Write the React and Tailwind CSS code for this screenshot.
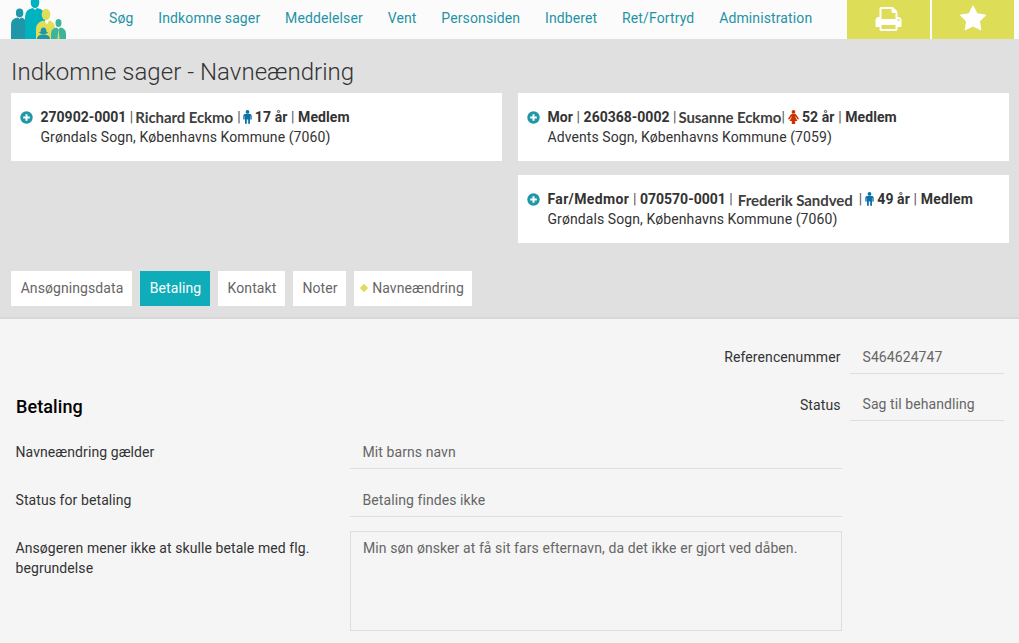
import { useState } from 'react'

const menu = ['Søg', 'Indkomne sager', 'Meddelelser', 'Vent', 'Personsiden', 'Indberet', 'Ret/Fortryd', 'Administration']

const tabs = [
  { name: 'Ansøgningsdata', width: 'w-[121px]' },
  { name: 'Betaling', width: 'w-[70px]' },
  { name: 'Kontakt', width: 'w-[67px]' },
  { name: 'Noter', width: 'w-[53px]' },
  { name: 'Navneændring', width: 'w-[118px]', marked: true },
]

function Logo() {
  return (
    <svg className="ml-[11px] h-[39px] w-[55px]" viewBox="11 0 55 39">
      <g fill="#1f97a9">
        <ellipse cx="19.6" cy="13" rx="3.7" ry="4.4" />
        <path d="M11 39V25q0-7 7-7.500l1.600 1.500 1.600-1.500q5 .5 5 7.500v14z" />
      </g>
      <g fill="#00b2bf">
        <ellipse cx="35" cy="2.500" rx="4.300" ry="5.500" />
        <path d="M25 39V17q0-8 8-9l2 2 2-2q8 1 8 9v22z" />
      </g>
      <g fill="#dfde56">
        <ellipse cx="46" cy="14.500" rx="4.300" ry="5.700" />
        <path d="M36 39V29q0-7 8-8.500l3 4 2-4q6 1 6 8v10.500z" />
      </g>
      <g fill="#1f97a9">
        <path d="M40.500 32q0-4.500 3-4.500t3 4.500l2 .5-2 1q-3 2-6 0l-2-1z" />
        <path d="M37 39q0-4.500 6.500-4.500t6.500 4.500z" />
      </g>
      <g fill="#3db39e">
        <ellipse cx="58.500" cy="23" rx="3" ry="4" />
        <path d="M51 39v-5q0-6 6-6.500l1.500 2 1.500-2q6 .5 6 6.500v5z" />
      </g>
      <path d="M58.500 28.500l1 10.500h-2z" fill="#dfde56" />
    </svg>
  )
}

function PlusIcon() {
  return (
    <svg className="h-[13px] w-[13px] shrink-0" viewBox="0 0 13 13">
      <circle cx="6.500" cy="6.500" r="6.200" fill="#1f97a9" />
      <path d="M6.500 3.200v6.600M3.200 6.500h6.600" stroke="#fff" strokeWidth="2" />
    </svg>
  )
}

function PersonIcon({ female }) {
  if (female) {
    return (
      <svg className="h-[14px] w-[11px]" viewBox="0 0 11 14" fill="#cc3300">
        <circle cx="5.500" cy="1.900" r="1.900" />
        <path d="M4 4h3q.8 0 1.300.8L10.800 8.500q.2.8-.5 1-.5.1-.9-.4L7.300 6.200v.9L9.500 11H7.200v3H3.800v-3H1.500l2.200-3.900v-.9L1.600 9.100q-.4.500-.9.400-.7-.2-.5-1L2.700 4.800Q3.200 4 4 4z" />
      </svg>
    )
  }
  return (
    <svg className="h-[14px] w-[9px]" viewBox="0 0 9 14" fill="#0b72a8">
      <circle cx="4.500" cy="1.900" r="1.900" />
      <path d="M2 4h5q1.700 0 1.700 1.700V9q0 .7-.7.700T7.300 9V6H7v7.200q0 .8-.9.800t-.9-.8V9.500H3.800v3.700q0 .8-.9.800T2 13.200V6h-.3v3q0 .7-.7.700T.3 9V5.700Q.3 4 2 4z" />
    </svg>
  )
}

function PersonCard({ address, children }) {
  return (
    <div className="flex h-[68px] w-[491px] shrink-0 bg-white pl-[9px] text-[#333]">
      <div className="pt-[18px]">
        <PlusIcon />
      </div>
      <div className="ml-[7.5px] pt-[14px] leading-5">
        <div className="flex h-5 items-center whitespace-pre font-bold">{children}</div>
        <div>{address}</div>
      </div>
    </div>
  )
}

const Sep = () => <span className="font-normal text-[#555]">|</span>

function Name({ children, className }) {
  return <span className={'font-[Lato,sans-serif] text-[15px] font-bold text-[#404040] ' + className}>{children}</span>
}

function Age({ children }) {
  return <span>{children} </span>
}

function Field({ children }) {
  return <div className="mt-[7px] h-[27px] border-b border-[#dedede] pl-[12.5px] text-[#666]">{children}</div>
}

export default function App() {
  const [active, setActive] = useState('Betaling')

  return (
    <div className="h-[643px] w-[1019px] overflow-hidden bg-[#f5f5f5] font-[Roboto,sans-serif] text-sm leading-5 tracking-[0.085px] text-[#333]">
      <header className="flex h-[39px] bg-[#fbfbfb]">
        <Logo />
        <nav className="ml-[43px] flex gap-[24.8px] pt-2 tracking-[0.12px] text-[#1f93a5]">
          {menu.map((item) => (
            <a key={item} href="#" className="whitespace-nowrap">{item}</a>
          ))}
        </nav>
        <div className="ml-auto mr-[5px] flex gap-0.5">
          <button className="flex w-[83px] justify-center bg-[#dddd57] pt-[5px]">
            <svg className="h-7 w-[29px]" viewBox="0 0 1792 1792" fill="#fff">
              <path d="M448 1536h896v-256h-896v256zM448 896h896v-384h-160q-40 0-68-28t-28-68v-160h-640v640zM1600 960q0-26-19-45t-45-19-45 19-19 45 19 45 45 19 45-19 19-45zM1728 960v416q0 13-9.500 22.500t-22.500 9.500h-224v160q0 40-28 68t-68 28h-960q-40 0-68-28t-28-68v-160h-224q-13 0-22.500-9.500t-9.500-22.500v-416q0-79 56.500-135.500t135.500-56.500h64v-544q0-40 28-68t68-28h672q40 0 88 20t76 48l152 152q28 28 48 76t20 88v256h64q79 0 135.500 56.500t56.500 135.500z" />
            </svg>
          </button>
          <button className="flex w-[82px] justify-center bg-[#dddd57] pt-[5px]">
            <svg className="h-7 w-7" viewBox="0 0 1792 1792" fill="#fff">
              <path d="M1728 647q0 22-26 48l-363 354 86 500q1 7 1 20 0 21-10.500 35.500t-30.500 14.500q-19 0-40-12l-449-236-449 236q-22 12-40 12-21 0-31.500-14.500t-10.500-35.500q0-6 2-20l86-500-364-354q-25-27-25-48 0-37 56-46l502-73 225-455q19-41 49-41t49 41l225 455 502 73q56 9 56 46z" />
            </svg>
          </button>
        </div>
      </header>

      <section className="h-[280px] border-b-2 border-[#d8d8d8] bg-[#e0e0e0] px-[11px]">
        <h1 className="h-[54px] pt-[17px] text-2xl leading-8 font-light tracking-[0.04px]">Indkomne sager - Navneændring</h1>
        <div className="flex gap-4">
          <PersonCard address="Grøndals Sogn, Københavns Kommune (7060)">
            <span className="tracking-normal">270902-0001 </span><Sep />
            <Name className="ml-[2px] w-[102px] pb-px tracking-[-0.1px]">Richard Eckmo</Name><Sep />
            <span className="mr-[3px] ml-0.5"><PersonIcon /></span><Age>17 år</Age><Sep /><span> Medlem</span>
          </PersonCard>
          <div className="flex flex-col gap-[14px]">
            <PersonCard address="Advents Sogn, Københavns Kommune (7059)">
              <span>Mor </span><Sep /><span className="tracking-normal"> 260368-0002 </span><Sep />
              <Name className="ml-[2px] w-[103px] pb-px tracking-[-0.1px]">Susanne Eckmo</Name><Sep />
              <span className="mr-[3px] ml-[3px]"><PersonIcon female /></span><Age>52 år</Age><Sep /><span> Medlem</span>
            </PersonCard>
            <PersonCard address="Grøndals Sogn, Københavns Kommune (7060)">
              <span className="tracking-[0.35px]">Far/Medmor </span><Sep /><span className="tracking-normal"> 070570-0001 </span><Sep />
              <Name className="ml-[5px] w-[121px] pt-px tracking-[-0.05px]">Frederik Sandved</Name><Sep />
              <span className="mr-[3px] ml-[3px]"><PersonIcon /></span><Age>49 år</Age><Sep /><span className="tracking-[0.2px]"> Medlem</span>
            </PersonCard>
          </div>
        </div>
        <div className="mt-7 flex gap-2">
          {tabs.map((tab) => (
            <button
              key={tab.name}
              onClick={() => setActive(tab.name)}
              className={
                'flex h-[35px] items-center justify-center pb-px pl-px whitespace-nowrap ' + tab.width +
                (active === tab.name ? ' bg-[#0eadb9] text-white' : ' bg-white text-[#666]')
              }
            >
              {tab.marked && <span className="mr-[5px] -ml-0.5 h-1.5 w-1.5 rotate-45 rounded-[1px] bg-[#dddd57]"></span>}
              {tab.name}
            </button>
          ))}
        </div>
      </section>

      <main className="grid grid-cols-[334px_500px_154px] pl-4">
        <h2 className="pt-[77px] text-lg leading-[22px] font-medium text-black">Betaling</h2>
        <div className="pr-[9.5px] pt-7 text-right">
          <div className="h-12">Referencenummer</div>
          <div>Status</div>
        </div>
        <div className="pt-7 text-[#666]">
          <div className="h-[27px] border-b border-[#dedede] pl-[12.5px]">S464624747</div>
          <div className="mt-5 h-[27px] border-b border-[#dedede] pl-[12.5px]">Sag til behandling</div>
        </div>
      </main>
      <form className="grid grid-cols-[334.5px_492px] grid-rows-[48px_48px_100px] pl-[15.5px] pt-[14px]">
        <label className="pt-[7px]">Navneændring gælder</label>
        <Field>Mit barns navn</Field>
        <label className="pt-[7px]">Status for betaling</label>
        <Field>Betaling findes ikke</Field>
        <label className="pt-[7px]">Ansøgeren mener ikke at skulle betale med flg. begrundelse</label>
        <textarea
          className="h-[100px] w-[492px] resize-none border border-[#dedede] px-3 py-1.5 text-[#666] outline-none"
          defaultValue="Min søn ønsker at få sit fars efternavn, da det ikke er gjort ved dåben."
        />
      </form>
    </div>
  )
}
